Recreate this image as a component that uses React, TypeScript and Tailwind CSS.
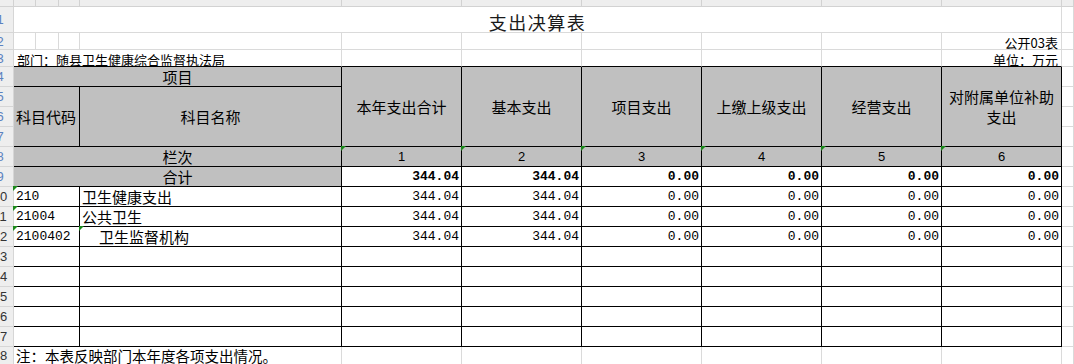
import React from 'react';

const LT = 'border-r border-b border-[#dadada]';
const BK = 'border-r border-b border-black';
const TOP = 'border-r border-b border-r-[#dadada] border-b-black';
const GRAY = 'bg-[#c0c0c0]';
const CJK = "font-['Noto_Sans_CJK_SC',sans-serif]";
const MONO = "font-['Liberation_Mono','Noto_Sans_CJK_SC',monospace]";

const rows = [
  { code: '210', name: '卫生健康支出', indent: false, vals: ['344.04', '344.04', '0.00', '0.00', '0.00', '0.00'] },
  { code: '21004', name: '公共卫生', indent: false, vals: ['344.04', '344.04', '0.00', '0.00', '0.00', '0.00'] },
  { code: '2100402', name: '卫生监督机构', indent: true, vals: ['344.04', '344.04', '0.00', '0.00', '0.00', '0.00'] },
];

const heads = ['本年支出合计', '基本支出', '项目支出', '上缴上级支出', '经营支出'];

function Tri() {
  return (
    <svg className="absolute left-[-1px] top-[-1px]" width="6" height="6">
      <polygon points="0,0 5,0 0,5" fill="#1c8a1c" />
    </svg>
  );
}

function RowHead({ n }: { n: number }) {
  return (
    <div className="border-r border-b border-[#d6d6d6] bg-[#eeeeee] overflow-hidden flex items-center">
      <div
        className={`w-[26px] ml-[-13px] shrink-0 text-center text-[13px] leading-none font-['Liberation_Sans',sans-serif] ${
          n < 10 ? 'text-[#5b82c0]' : 'text-[#333333]'
        }`}
      >
        {n}
      </div>
    </div>
  );
}

function Side() {
  return <div className={LT} />;
}

export default function App() {
  return (
    <div className="w-[1074px] h-[364px] overflow-hidden bg-white text-black">
      <div className="grid grid-cols-[14px_22px_23px_21px_262px_repeat(6,120px)_12px] grid-rows-[7px_26px_17px_17px_repeat(14,20px)]">
        {/* column header strip */}
        {Array.from({ length: 12 }).map((_, i) => (
          <div key={i} className="bg-[#eeeeee] border-r border-b border-[#d2d2d2]" />
        ))}

        {/* row 1: title */}
        <RowHead n={1} />
        <div className={`col-span-10 ${LT} flex items-end justify-center pb-[1px]`}>
          <span className={`${CJK} text-[18px] leading-none tracking-[1.5px] text-[#1a1a1a]`}>支出决算表</span>
        </div>
        <Side />

        {/* row 2 */}
        <RowHead n={2} />
        {Array.from({ length: 9 }).map((_, i) => (
          <div key={i} className={LT} />
        ))}
        <div className={`${LT} flex items-end justify-end pr-[3px]`}>
          <span className={`${CJK} text-[13px] leading-none`}>公开03表</span>
        </div>
        <Side />

        {/* row 3 */}
        <RowHead n={3} />
        <div className={`col-span-4 ${TOP} flex items-end pl-[3px]`}>
          <span className={`${CJK} text-[13px] leading-none whitespace-nowrap`}>部门：随县卫生健康综合监督执法局</span>
        </div>
        {Array.from({ length: 5 }).map((_, i) => (
          <div key={i} className={TOP} />
        ))}
        <div className={`${TOP} flex items-end justify-end pr-[3px]`}>
          <span className={`${CJK} text-[13px] leading-none`}>单位：万元</span>
        </div>
        <Side />

        {/* row 4 */}
        <RowHead n={4} />
        <div className={`col-span-4 ${BK} ${GRAY} flex items-center justify-center`}>
          <span className={`${CJK} text-[15px] leading-none`}>项目</span>
        </div>
        {heads.map((h) => (
          <div key={h} className={`row-span-4 ${BK} ${GRAY} flex items-center justify-center`}>
            <span className={`${CJK} text-[15px] leading-none`}>{h}</span>
          </div>
        ))}
        <div className={`row-span-4 ${BK} ${GRAY} flex items-center justify-center text-center`}>
          <span className={`${CJK} text-[15px] leading-[20px]`}>
            对附属单位补助
            <br />
            支出
          </span>
        </div>
        <Side />

        {/* rows 5-7 */}
        <RowHead n={5} />
        <div className={`col-span-3 row-span-3 ${BK} ${GRAY} flex items-center pl-[2px]`}>
          <span className={`${CJK} text-[15px] leading-none whitespace-nowrap`}>科目代码</span>
        </div>
        <div className={`row-span-3 ${BK} ${GRAY} flex items-center justify-center`}>
          <span className={`${CJK} text-[15px] leading-none`}>科目名称</span>
        </div>
        <Side />
        <RowHead n={6} />
        <Side />
        <RowHead n={7} />
        <Side />

        {/* row 8: 栏次 */}
        <RowHead n={8} />
        <div className={`col-span-4 ${BK} ${GRAY} flex items-center justify-center`}>
          <span className={`${CJK} text-[15px] leading-none`}>栏次</span>
        </div>
        {[1, 2, 3, 4, 5, 6].map((n) => (
          <div key={n} className={`relative ${BK} ${GRAY} flex items-center justify-center`}>
            <Tri />
            <span className="font-['Liberation_Sans',sans-serif] text-[13px] leading-none">{n}</span>
          </div>
        ))}
        <Side />

        {/* row 9: 合计 */}
        <RowHead n={9} />
        <div className={`col-span-4 ${BK} ${GRAY} flex items-center justify-center`}>
          <span className={`${CJK} text-[15px] leading-none`}>合计</span>
        </div>
        {rows[0].vals.map((v, i) => (
          <div key={i} className={`${BK} flex items-center justify-end pr-[2px]`}>
            <span className={`${MONO} text-[13px] leading-none font-bold`}>{v}</span>
          </div>
        ))}
        <Side />

        {/* data rows */}
        {rows.map((r, ri) => (
          <React.Fragment key={r.code}>
            <RowHead n={10 + ri} />
            <div className={`relative col-span-3 ${BK} flex items-center pl-[2px]`}>
              <Tri />
              <span className={`${MONO} text-[13px] leading-none`}>{r.code}</span>
            </div>
            <div className={`relative ${BK} flex items-center ${r.indent ? 'pl-[19px]' : 'pl-[2px]'}`}>
              {r.indent && <Tri />}
              <span className={`${CJK} text-[15px] leading-none whitespace-nowrap`}>{r.name}</span>
            </div>
            {r.vals.map((v, i) => (
              <div key={i} className={`${BK} flex items-center justify-end pr-[2px]`}>
                <span className={`${MONO} text-[13px] leading-none`}>{v}</span>
              </div>
            ))}
            <Side />
          </React.Fragment>
        ))}

        {/* empty rows */}
        {[13, 14, 15, 16, 17].map((n) => (
          <React.Fragment key={n}>
            <RowHead n={n} />
            <div className={`col-span-3 ${BK}`} />
            <div className={BK} />
            {Array.from({ length: 6 }).map((_, i) => (
              <div key={i} className={BK} />
            ))}
            <Side />
          </React.Fragment>
        ))}

        {/* row 18: note */}
        <RowHead n={18} />
        <div className={`col-span-4 ${LT} flex items-start pt-[2px] pl-[2px]`}>
          <span className={`${CJK} text-[14.5px] leading-none whitespace-nowrap`}>注：本表反映部门本年度各项支出情况。</span>
        </div>
        {Array.from({ length: 6 }).map((_, i) => (
          <div key={i} className={LT} />
        ))}
        <Side />
      </div>
    </div>
  );
}
